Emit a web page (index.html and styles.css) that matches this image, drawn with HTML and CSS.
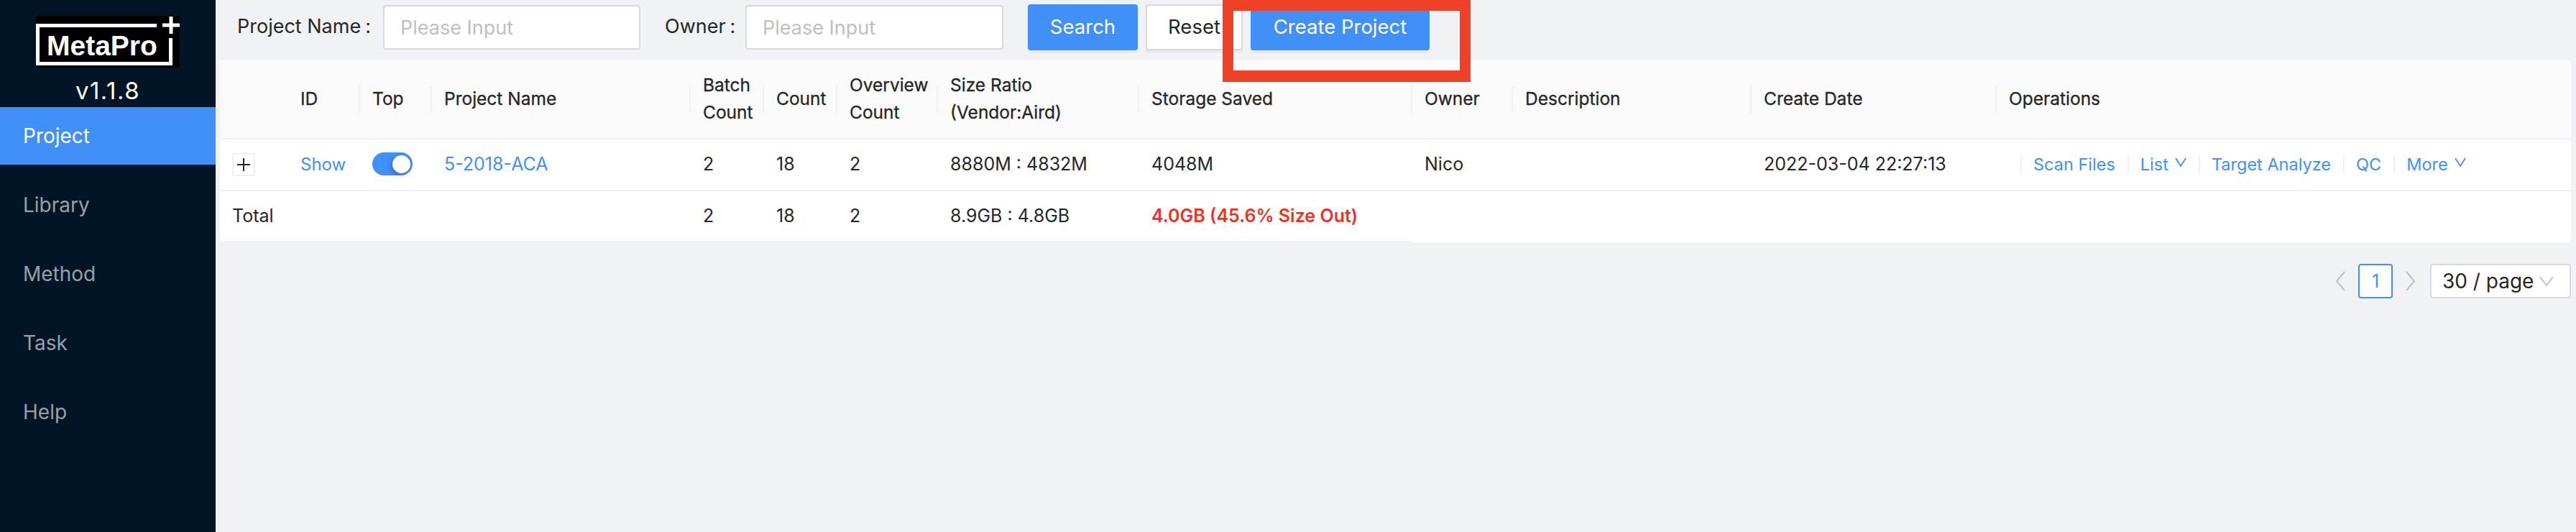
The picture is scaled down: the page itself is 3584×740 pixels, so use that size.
FILE: index.html
```html
<!DOCTYPE html>
<html lang="en">
<head>
<meta charset="utf-8">
<title>MetaPro</title>
<link rel="stylesheet" href="styles.css">
</head>
<body>
<div class="app">
  <aside class="sidebar">
    <div class="brand">
      <svg class="logo" width="200" height="72" viewBox="0 0 200 72">
        <rect width="200" height="72" fill="#000"/>
        <path d="M2.500 11V66.500H187.500V31M0 13.500H168" fill="none" stroke="#fff" stroke-width="5"/>
        <path d="M188 1V25M176 13H200" fill="none" stroke="#fff" stroke-width="5"/>
        <text class="logo-text" x="15" y="55">MetaPro</text>
      </svg>
      <div class="version">v1.1.8</div>
    </div>
    <nav class="menu">
      <a class="menu-item active">Project</a>
      <a class="menu-item">Library</a>
      <a class="menu-item">Method</a>
      <a class="menu-item">Task</a>
      <a class="menu-item">Help</a>
    </nav>
  </aside>
  <main class="main">
    <form class="toolbar">
      <label class="label label-name">Project Name<span class="colon">:</span></label>
      <input class="input" placeholder="Please Input">
      <label class="label label-owner">Owner<span class="colon">:</span></label>
      <input class="input input-owner" placeholder="Please Input">
      <button type="button" class="btn primary search">Search</button>
      <button type="button" class="btn reset">Reset</button>
      <button type="button" class="btn primary create">Create Project</button>
    </form>
    <table class="grid">
      <colgroup>
        <col class="c0"><col class="c1"><col class="c2"><col class="c3"><col class="c4"><col class="c5"><col class="c6"><col class="c7"><col class="c8"><col class="c9"><col class="c10"><col class="c11"><col>
      </colgroup>
      <thead>
        <tr>
          <th class="first"></th>
          <th>ID</th><th>Top</th><th>Project Name</th><th>Batch<br>Count</th><th>Count</th><th>Overview<br>Count</th><th>Size Ratio<br>(Vendor:Aird)</th><th>Storage Saved</th><th>Owner</th><th>Description</th><th>Create Date</th><th class="last">Operations</th>
        </tr>
      </thead>
      <tbody>
        <tr class="row">
          <td class="expand-cell"><span class="expand"><svg width="20" height="20" viewBox="0 0 20 20"><path d="M1 10H19M10 1V19" stroke="#262626" stroke-width="2"/></svg></span></td>
          <td><a class="link show">Show</a></td>
          <td><span class="switch"><span class="thumb"></span></span></td>
          <td><a class="link">5-2018-ACA</a></td>
          <td>2</td><td>18</td><td>2</td><td>8880M : 4832M</td><td>4048M</td><td>Nico</td><td></td><td>2022-03-04 22:27:13</td>
          <td class="ops">
            <div class="op-list">
              <a class="op">Scan Files</a>
              <a class="op">List<svg class="chev" width="16" height="13" viewBox="0 0 16 13"><path d="M1 1L8 12L15 1" fill="none" stroke="#4090f7" stroke-width="1.800"/></svg></a>
              <a class="op">Target Analyze</a>
              <a class="op">QC</a>
              <a class="op">More<svg class="chev" width="16" height="13" viewBox="0 0 16 13"><path d="M1 1L8 12L15 1" fill="none" stroke="#4090f7" stroke-width="1.800"/></svg></a>
            </div>
          </td>
        </tr>
        <tr class="total">
          <td>Total</td><td></td><td></td><td></td><td>2</td><td>18</td><td>2</td><td>8.9GB : 4.8GB</td><td class="saved">4.0GB (45.6% Size Out)</td>
          <td class="tail"></td><td class="tail"></td><td class="tail"></td><td class="tail"></td>
        </tr>
      </tbody>
    </table>
    <div class="pager">
      <svg class="arrow" width="14" height="28" viewBox="0 0 14 28"><path d="M13 1L2 14L13 27" fill="none" stroke="#bfbfbf" stroke-width="2"/></svg>
      <span class="page">1</span>
      <svg class="arrow" width="14" height="28" viewBox="0 0 14 28"><path d="M1 1L12 14L1 27" fill="none" stroke="#bfbfbf" stroke-width="2"/></svg>
      <span class="size">30 / page<svg width="20" height="14" viewBox="0 0 20 14"><path d="M1 1L10 13L19 1" fill="none" stroke="#bfbfbf" stroke-width="2"/></svg></span>
    </div>
  </main>
</div>
<div class="marker"></div>
</body>
</html>
```
FILE: styles.css
```css
* { box-sizing: border-box; }
html, body { margin: 0; height: 100%; }
body {
  background: #f0f2f5;
  color: #262626;
  font-family: Inter, "Liberation Sans", sans-serif;
  overflow: hidden;
}
.app { display: flex; height: 740px; }
.sidebar { width: 300px; flex: none; background: #021527; }
.brand { height: 149px; padding-top: 22px; display: flex; flex-direction: column; align-items: center; }
.logo { display: block; }
.logo-text { font: 700 39px "Liberation Sans", Arial, sans-serif; fill: #fff; }
.version { color: #fff; font-size: 33px; line-height: 36px; margin-top: 14px; letter-spacing: 1.500px; }
.menu { display: flex; flex-direction: column; gap: 16px; }
.menu-item { height: 80px; display: flex; align-items: center; padding-left: 32px; font-size: 28px; color: rgba(255,255,255,.6); }
.menu-item.active { background: #4090f7; color: #fff; }
.main { flex: 1; min-width: 0; padding: 0 7px 0 6px; }
.toolbar { height: 84px; display: flex; align-items: flex-start; padding-top: 7px; }
.label { font-size: 27px; line-height: 60px; white-space: nowrap; }
.colon { margin-left: 6px; }
.label-name { margin-left: 24px; width: 203px; }
.label-owner { margin-left: 34px; width: 112px; }
.input {
  width: 358px; height: 62px; border: 2px solid #d9d9d9; border-radius: 4px; background: #fff;
  padding: 0 22px; font: 27px Inter, sans-serif; color: #262626; outline: none;
}
.input-owner { width: 359px; }
.input::placeholder { color: #bfbfbf; opacity: 1; }
.btn {
  height: 64px; margin-top: -1px; border-radius: 4px; font: 27.500px Inter, sans-serif; cursor: pointer;
  box-shadow: 0 4px 0 rgba(0,0,0,.03); padding: 0 0 2px;
}
.primary { background: #4090f7; border: 2px solid #4090f7; color: #fff; }
.search { width: 153px; margin-left: 34px; }
.reset { width: 135px; margin-left: 11px; background: #fff; border: 2px solid #d9d9d9; color: #262626; }
.create { width: 249px; margin-left: 11px; }
.grid { width: 3271px; table-layout: fixed; border-collapse: collapse; background: #fff; border-radius: 4px; font-size: 25px; }
.c0 { width: 95px; } .c1 { width: 100px; } .c2 { width: 100px; } .c3 { width: 360px; }
.c4 { width: 102px; } .c5 { width: 102px; } .c6 { width: 140px; } .c7 { width: 280px; }
.c8 { width: 380px; } .c9 { width: 140px; } .c10 { width: 332px; } .c11 { width: 341px; }
th {
  position: relative; height: 109px; padding: 0 17px 2px 17px; background: #fafafa; text-align: left;
  font-size: 24.500px; font-weight: 400; line-height: 38px; border-bottom: 2px solid #f0f0f0; white-space: nowrap;
  -webkit-text-stroke: .3px #262626;
}
th:not(.first):not(.last)::after {
  content: ""; position: absolute; right: 0; top: 35px; width: 2px; height: 38px; background: #f0f0f0;
}
td { padding: 0 0 2px 17px; white-space: nowrap; }
.row td { height: 72px; border-bottom: 2px solid #f0f0f0; }
.total td { height: 70px; }
.saved { color: #ee3124; font-weight: 600; }
.total .tail { box-shadow: 0 2px 0 #fff; }
.link, .op { color: #4090f7; text-decoration: none; }
.show { font-size: 24px; }
.row .expand-cell { padding: 0 0 0 17px; }
.expand { width: 32px; height: 32px; display: flex; align-items: center; justify-content: center; border: 2px solid #f0f0f0; border-radius: 2px; background: #fff; }
.switch { display: block; width: 56px; height: 32px; border-radius: 16px; background: #4090f7; position: relative; }
.thumb { position: absolute; right: 3px; top: 4px; width: 25px; height: 25px; border-radius: 50%; background: #fff; box-shadow: -2px 3px 6px rgba(0,40,100,.25); }
.row .ops { padding: 0 0 2px 51px; }
.op-list { display: flex; gap: 35px; align-items: center; }
.op { display: inline-flex; align-items: center; font-size: 23.500px; height: 25px; position: relative; }
.op::before { content: ""; position: absolute; left: -18px; top: 0; width: 2px; height: 25px; background: #f0f0f0; }
.chev { margin-left: 9px; margin-top: -6px; }
.pager { display: flex; justify-content: flex-end; align-items: center; margin-top: 32px; padding-right: 0; }
.arrow { display: block; }
.page { width: 48px; height: 48px; margin: 0 18px; display: flex; align-items: center; justify-content: center; border: 2px solid #4090f7; border-radius: 4px; background: #fff; color: #4090f7; font-size: 25px; }
.size { width: 196px; height: 48px; margin-left: 20px; padding: 0 22px 0 15px; display: flex; align-items: center; justify-content: space-between; border: 2px solid #d9d9d9; border-radius: 4px; background: #fff; font-size: 28px; }
.marker { position: absolute; left: 1701px; top: -1px; width: 345px; height: 115px; border: 15px solid #ee4126; border-top-width: 16px; border-bottom-width: 16px; }
```
